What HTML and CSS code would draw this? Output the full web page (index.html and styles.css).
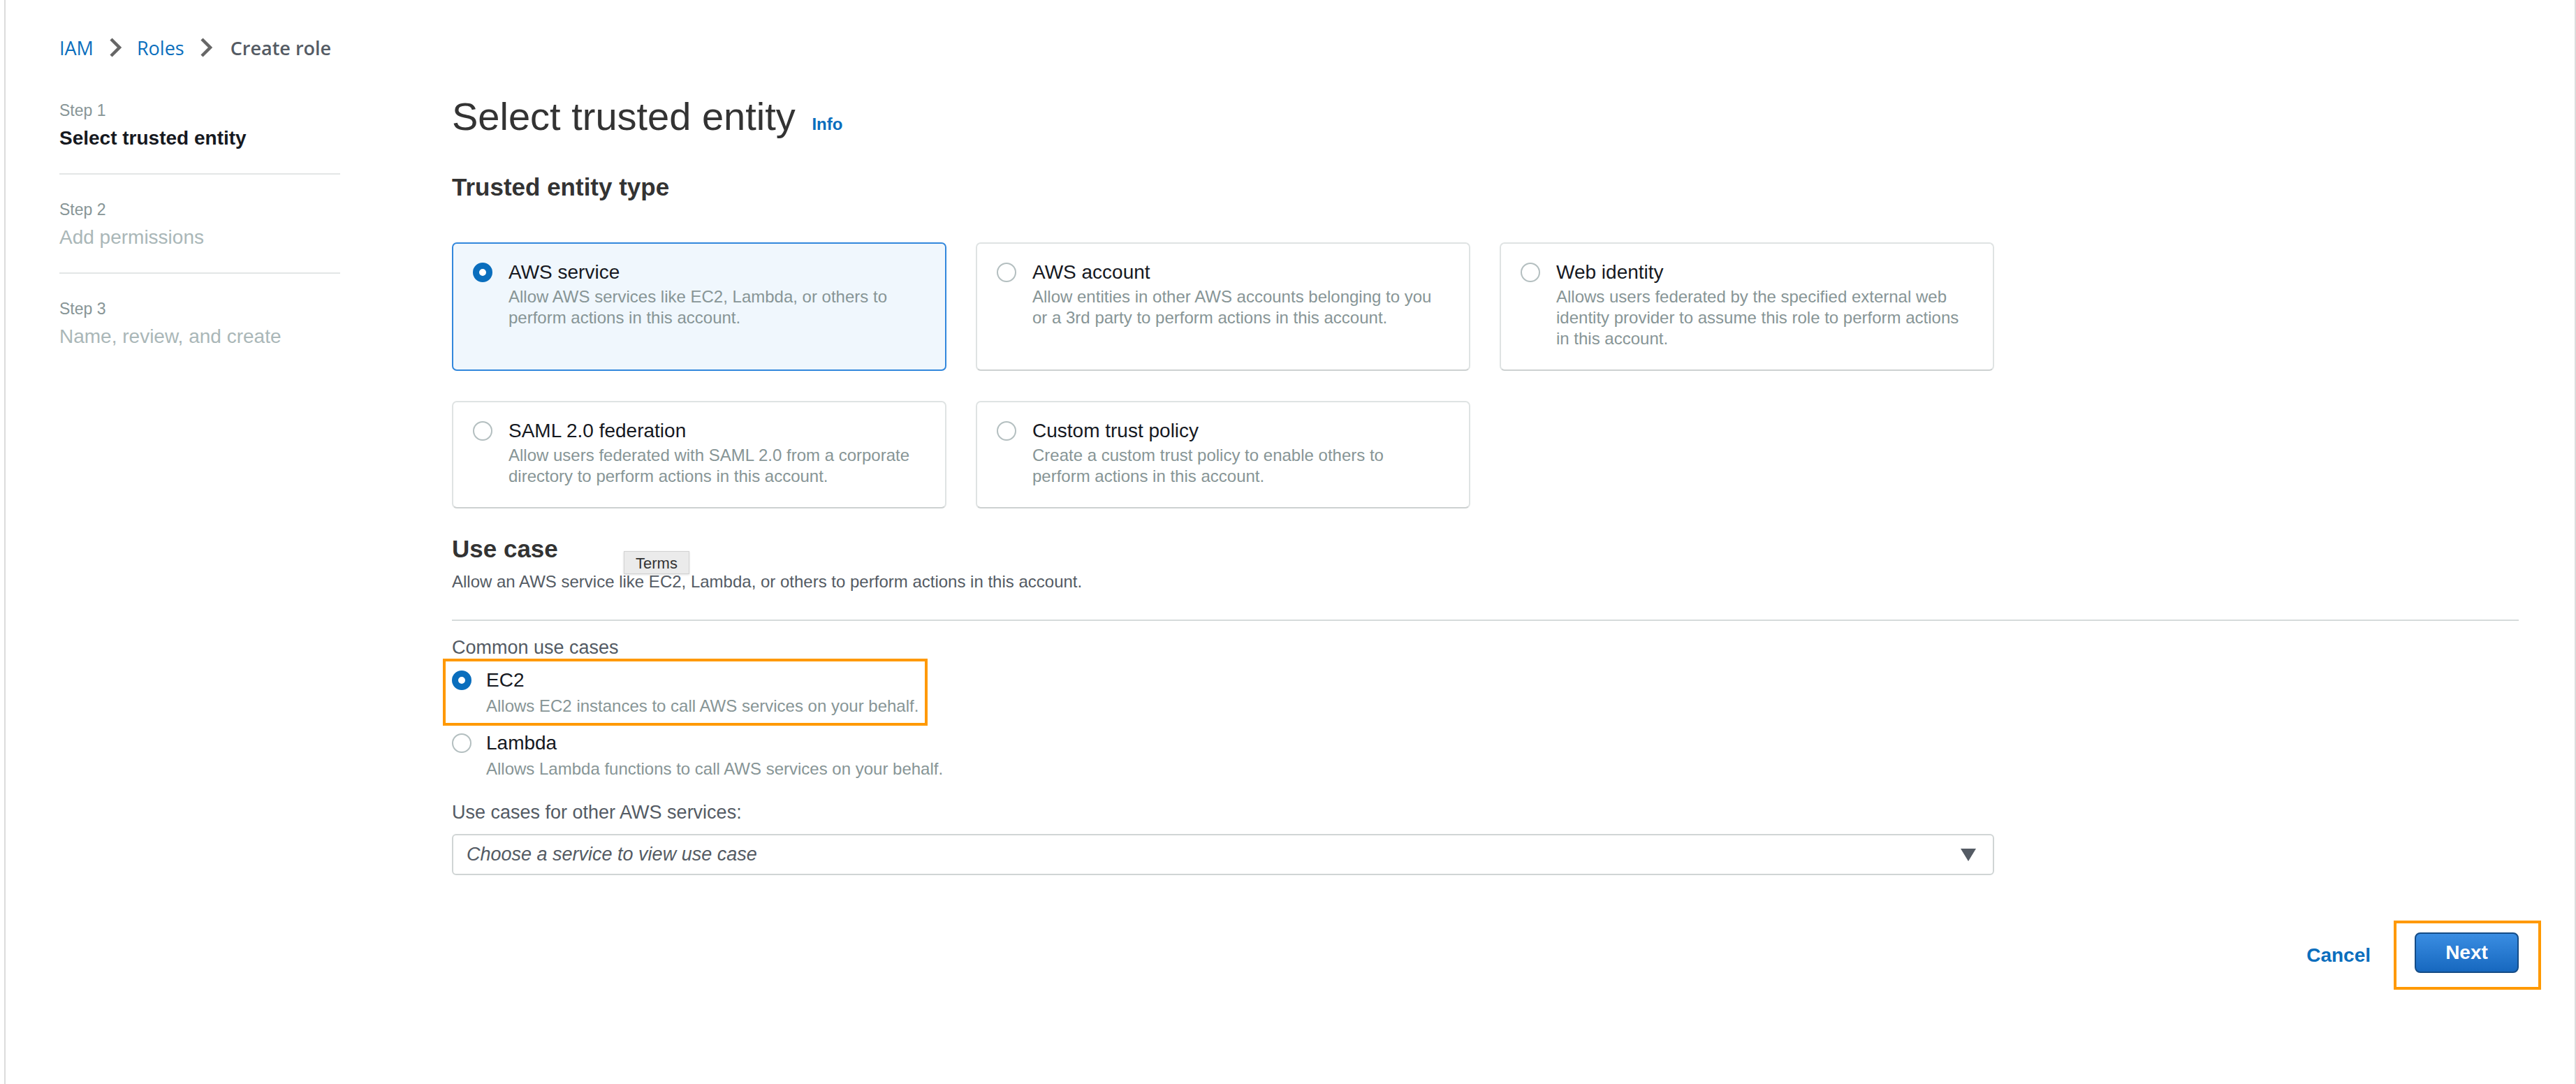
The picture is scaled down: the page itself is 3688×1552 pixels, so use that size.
FILE: index.html
```html
<!DOCTYPE html>
<html lang="en">
<head>
    <meta charset="UTF-8">
    <meta name="viewport" content="width=device-width, initial-scale=1.0">
    <title>Create role</title>
    <link rel="stylesheet" href="styles.css">
</head>
<body>
<div class="frame">
    <nav class="breadcrumb">
        <a href="#">IAM</a>
        <svg class="crumb-sep" width="18" height="30" viewBox="0 0 18 30"><polyline points="3,3 15,15 3,27"/></svg>
        <a href="#">Roles</a>
        <svg class="crumb-sep" width="18" height="30" viewBox="0 0 18 30"><polyline points="3,3 15,15 3,27"/></svg>
        <span class="current">Create role</span>
    </nav>

    <div class="layout">
        <aside class="steps">
            <div class="step">
                <div class="step-label">Step 1</div>
                <div class="step-title active">Select trusted entity</div>
            </div>
            <div class="step">
                <div class="step-label">Step 2</div>
                <div class="step-title">Add permissions</div>
            </div>
            <div class="step last">
                <div class="step-label">Step 3</div>
                <div class="step-title">Name, review, and create</div>
            </div>
        </aside>

        <main class="main">
            <h1 class="page-title">Select trusted entity <a class="info" href="#">Info</a></h1>
            <h2 class="section-title">Trusted entity type</h2>

            <div class="tiles">
                <div class="tile selected">
                    <span class="radio checked"></span>
                    <div class="tile-body">
                        <div class="tile-title">AWS service</div>
                        <div class="tile-desc">Allow AWS services like EC2, Lambda, or others to perform actions in this account.</div>
                    </div>
                </div>
                <div class="tile">
                    <span class="radio"></span>
                    <div class="tile-body">
                        <div class="tile-title">AWS account</div>
                        <div class="tile-desc">Allow entities in other AWS accounts belonging to you or a 3rd party to perform actions in this account.</div>
                    </div>
                </div>
                <div class="tile">
                    <span class="radio"></span>
                    <div class="tile-body">
                        <div class="tile-title">Web identity</div>
                        <div class="tile-desc">Allows users federated by the specified external web identity provider to assume this role to perform actions in this account.</div>
                    </div>
                </div>
                <div class="tile">
                    <span class="radio"></span>
                    <div class="tile-body">
                        <div class="tile-title">SAML 2.0 federation</div>
                        <div class="tile-desc">Allow users federated with SAML 2.0 from a corporate directory to perform actions in this account.</div>
                    </div>
                </div>
                <div class="tile">
                    <span class="radio"></span>
                    <div class="tile-body">
                        <div class="tile-title">Custom trust policy</div>
                        <div class="tile-desc">Create a custom trust policy to enable others to perform actions in this account.</div>
                    </div>
                </div>
            </div>

            <section class="use-case">
                <div class="use-case-head">
                    <h2 class="section-title">Use case</h2>
                    <p>Allow an AWS service like EC2, Lambda, or others to perform actions in this account.</p>
                    <div class="tooltip">Terms</div>
                </div>

                <div class="field-label">Common use cases</div>
                <div class="option marked">
                    <span class="radio checked"></span>
                    <div>
                        <div class="option-title">EC2</div>
                        <div class="option-desc">Allows EC2 instances to call AWS services on your behalf.</div>
                    </div>
                </div>
                <div class="option">
                    <span class="radio"></span>
                    <div>
                        <div class="option-title">Lambda</div>
                        <div class="option-desc">Allows Lambda functions to call AWS services on your behalf.</div>
                    </div>
                </div>

                <div class="field-label other">Use cases for other AWS services:</div>
                <div class="select">
                    <span class="placeholder">Choose a service to view use case</span>
                    <span class="caret"></span>
                </div>
            </section>

            <div class="actions">
                <a class="cancel" href="#">Cancel</a>
                <div class="next-wrap">
                    <button class="btn-next">Next</button>
                </div>
            </div>
        </main>
    </div>
</div>
</body>
</html>
```

FILE: styles.css
```css
* {
    box-sizing: border-box;
}

body {
    margin: 0;
    background-color: #ffffff;
    font-family: "Liberation Sans", Arial, sans-serif;
    color: #16191f;
}

a {
    text-decoration: none;
}

.frame {
    min-height: 100vh;
    margin-left: 6px;
    padding: 48px 80px 0 77px;
    border-left: 2px solid #dcdcdc;
    border-right: 2px solid #dcdcdc;
}

/* breadcrumb */

.breadcrumb {
    display: flex;
    align-items: center;
    height: 40px;
    font-family: "Open Sans", sans-serif;
    font-size: 27px;
}

.breadcrumb a {
    color: #0a6ebd;
}

.crumb-sep {
    margin: 0 22px;
    fill: none;
    stroke: #666666;
    stroke-width: 4.5;
}

.breadcrumb .current {
    color: #545b64;
    font-weight: 600;
    margin-left: 4px;
}

.layout {
    display: grid;
    grid-template-columns: 402px 1fr;
    column-gap: 160px;
    margin-top: 47px;
}

/* steps */

.steps {
    padding-top: 7px;
}

.step {
    padding: 34px 0 32px;
    border-bottom: 2px solid #e3e6e6;
}

.step:first-child {
    padding-top: 0;
}

.step.last {
    border-bottom: none;
}

.step-label {
    font-size: 23px;
    line-height: 32px;
    color: #879596;
}

.step-title {
    margin-top: 6px;
    font-size: 28px;
    line-height: 36px;
    color: #aab7b8;
}

.step-title.active {
    font-weight: bold;
    color: #16191f;
}

/* main */

.page-title {
    margin: 0;
    font-size: 56px;
    line-height: 64px;
    font-weight: normal;
    color: #333333;
}

.info {
    margin-left: 8px;
    font-size: 24px;
    font-weight: bold;
    color: #0a6ebd;
}

.section-title {
    margin: 36px 0 0;
    font-size: 35px;
    line-height: 44px;
    font-weight: bold;
    color: #333333;
}

.tiles {
    display: grid;
    grid-template-columns: repeat(3, 708px);
    column-gap: 42px;
    row-gap: 43px;
    margin-top: 57px;
}

.tile {
    display: flex;
    align-items: flex-start;
    padding: 25px 34px 29px 28px;
    border: 2px solid #dfe3e3;
    border-bottom-color: #cdd1d1;
    border-radius: 7px;
    background-color: #ffffff;
}

.tile.selected {
    border-color: #3287dc;
    background-color: #f0f7fd;
}

.radio {
    flex: none;
    width: 28px;
    height: 28px;
    margin-top: 2px;
    border: 2px solid #b4bfc0;
    border-radius: 50%;
    background-color: #ffffff;
}

.radio.checked {
    border: 9px solid #0a6ebd;
}

.tile-body {
    margin-left: 23px;
}

.tile-title {
    font-size: 28px;
    line-height: 32px;
    color: #16191f;
}

.tile-desc {
    margin-top: 4px;
    font-size: 24px;
    line-height: 30px;
    color: #879596;
}

/* use case */

.use-case-head {
    position: relative;
    margin-top: 36px;
    padding-bottom: 38px;
    border-bottom: 2px solid #d5dbdb;
}

.use-case-head .section-title {
    margin-top: 0;
}

.use-case-head p {
    margin: 9px 0 0;
    font-size: 24px;
    line-height: 32px;
    color: #545b64;
}

.tooltip {
    position: absolute;
    left: 246px;
    top: 25px;
    padding: 0 16px;
    height: 33px;
    line-height: 33px;
    font-size: 22px;
    color: #333333;
    background-color: #ebebeb;
    border: 1px solid #d2d2d2;
    box-shadow: 0 1px 3px rgba(0, 0, 0, 0.12);
}

.field-label {
    margin-top: 22px;
    font-size: 27px;
    line-height: 32px;
    color: #545b64;
}

.field-label.other {
    margin-top: 31px;
}

.option {
    display: flex;
    align-items: flex-start;
    width: fit-content;
    margin-top: 20px;
}

.option.marked {
    margin-top: 13px;
    outline: 4px solid #ff9900;
    outline-offset: 9px;
}

.option .radio {
    margin-top: 4px;
}

.option-title {
    margin-left: 21px;
    font-size: 28px;
    line-height: 36px;
    color: #16191f;
}

.option-desc {
    margin: 4px 0 0 21px;
    font-size: 24px;
    line-height: 30px;
    color: #879596;
}

.select {
    display: flex;
    align-items: center;
    justify-content: space-between;
    width: 2208px;
    height: 59px;
    margin-top: 15px;
    padding: 0 24px 0 19px;
    border: 2px solid #d0d5d5;
    border-radius: 6px;
}

.placeholder {
    font-size: 27px;
    font-style: italic;
    color: #545b64;
}

.caret {
    width: 0;
    height: 0;
    border-left: 11px solid transparent;
    border-right: 11px solid transparent;
    border-top: 18px solid #545b64;
}

/* footer buttons */

.actions {
    display: flex;
    justify-content: flex-end;
    align-items: center;
    margin: 65px -32px 0 0;
}

.cancel {
    margin-right: 33px;
    font-size: 28px;
    font-weight: bold;
    color: #0a6ebd;
}

.next-wrap {
    padding: 13px 28px 20px 26px;
    border: 4px solid #ff9900;
}

.btn-next {
    display: block;
    width: 149px;
    height: 58px;
    border: 2px solid #154c86;
    border-radius: 8px;
    background: linear-gradient(#3a8de2, #1768bf);
    color: #ffffff;
    font-family: "Liberation Sans", Arial, sans-serif;
    font-size: 28px;
    font-weight: bold;
}
```
